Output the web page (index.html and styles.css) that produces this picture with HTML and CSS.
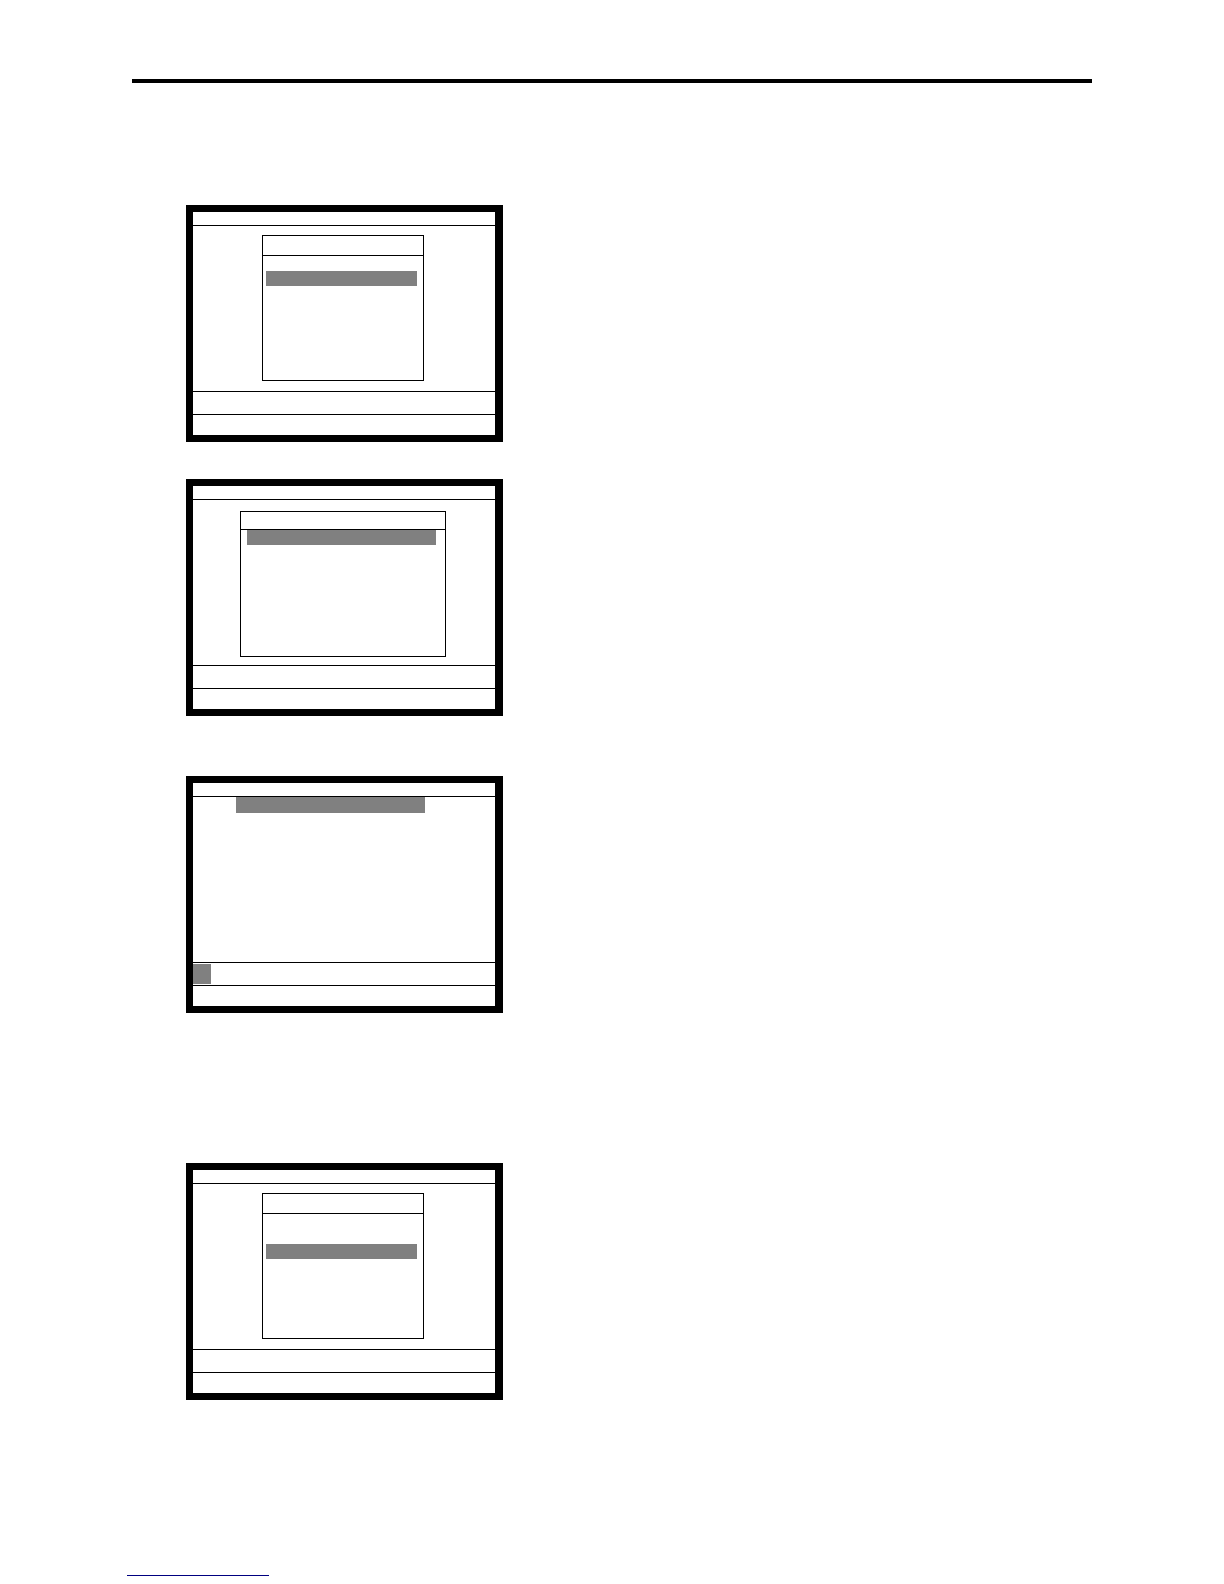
FILE: index.html
```html
<!DOCTYPE html>
<html lang="en">
<head>
    <meta charset="utf-8">
    <title>Screens</title>
    <link rel="stylesheet" href="styles.css">
</head>
<body>
    <hr class="rule">

    <main class="screens">
        <section class="screen">
            <div class="title"></div>
            <div class="content">
                <div class="menu">
                    <div class="menu-title"></div>
                    <ul class="rows">
                        <li></li>
                        <li class="selected"></li>
                        <li></li>
                        <li></li>
                        <li></li>
                    </ul>
                </div>
            </div>
            <div class="entry"></div>
            <div class="status"></div>
        </section>

        <section class="screen">
            <div class="title"></div>
            <div class="content">
                <div class="menu wide">
                    <div class="menu-title"></div>
                    <ul class="rows">
                        <li class="selected"></li>
                        <li></li>
                        <li></li>
                        <li></li>
                        <li></li>
                    </ul>
                </div>
            </div>
            <div class="entry"></div>
            <div class="status"></div>
        </section>

        <section class="screen program">
            <div class="title"></div>
            <div class="content">
                <div class="field"></div>
            </div>
            <div class="entry"><span class="cursor"></span></div>
            <div class="status"></div>
        </section>

        <section class="screen last">
            <div class="title"></div>
            <div class="content">
                <div class="menu">
                    <div class="menu-title"></div>
                    <ul class="rows">
                        <li></li>
                        <li></li>
                        <li class="selected"></li>
                        <li></li>
                        <li></li>
                    </ul>
                </div>
            </div>
            <div class="entry"></div>
            <div class="status"></div>
        </section>
    </main>

    <footer class="footer">
        <div class="link-line"></div>
    </footer>
</body>
</html>
```

FILE: styles.css
```css
* {
    box-sizing: border-box;
}

body {
    margin: 0;
    padding: 79px 132px 8px;
    background-color: #fff;
    font-family: "Liberation Sans", Arial, sans-serif;
}

.rule {
    height: 4px;
    margin: 0;
    border: none;
    background-color: #000;
}

.screens {
    padding: 122px 0 0 54px;
}

/* terminal screen with a thick frame */
.screen {
    display: flex;
    flex-direction: column;
    width: 317px;
    max-width: 100%;
    margin-bottom: 37px;
    border: 7px solid #000;
    border-right-width: 8px;
}

.screen.program {
    margin-top: 60px;
}

.screen.last {
    margin-top: 150px;
    margin-bottom: 0;
}

.title {
    height: 14px;
    border-bottom: 1px solid #000;
}

.content {
    min-height: 165px;
}

.entry {
    height: 23px;
    padding-top: 1px;
    border-top: 1px solid #000;
}

.status {
    height: 21px;
    border-top: 1px solid #000;
}

.menu {
    width: 162px;
    min-height: 146px;
    margin: 9px 0 0 69px;
    border: 1px solid #000;
}

.menu-title {
    height: 20px;
    border-bottom: 1px solid #000;
}

.rows {
    margin: 0;
    padding: 0 6px 0 3px;
    list-style: none;
}

.rows li {
    height: 15px;
}

.rows .selected {
    background-color: #808080;
}

.menu.wide {
    width: 206px;
    margin: 11px 0 0 47px;
}

.wide .menu-title {
    height: 18px;
}

.wide .rows {
    padding: 0 9px 0 6px;
}

.field {
    width: 189px;
    height: 16px;
    margin-left: 43px;
    background-color: #808080;
}

.cursor {
    display: block;
    width: 18px;
    height: 20px;
    background-color: #808080;
}

.footer {
    padding-top: 175px;
}

/* underline starts a little left of the rule */
.link-line {
    width: 142px;
    height: 1px;
    margin-left: -5px;
    background-color: #000080;
}
```
